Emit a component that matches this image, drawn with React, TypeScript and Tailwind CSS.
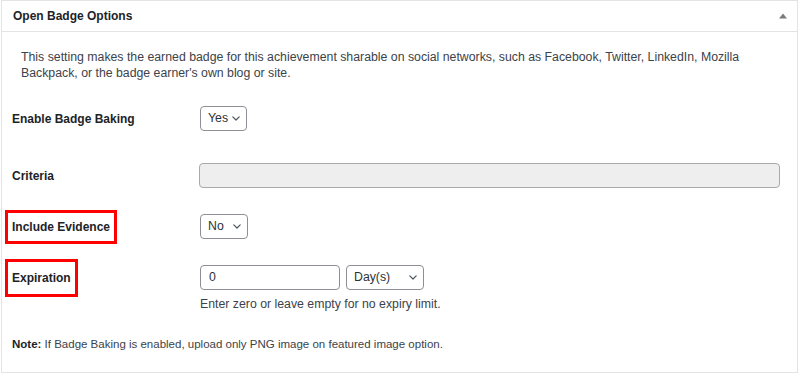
import React from "react";

const Chevron = () => (
  <svg width="8" height="5" viewBox="0 0 8 5" fill="none" className="shrink-0">
    <path d="M0.8 0.8l3.2 3.2 3.2-3.2" stroke="#50575e" strokeWidth="1.2" strokeLinecap="round" strokeLinejoin="round" />
  </svg>
);

function Select({ value, width }: { value: string; width: string }) {
  return (
    <div
      className={`flex h-[25px] items-center justify-between rounded-[4px] border border-[#8c8f94] bg-white pl-[7px] pr-[6px] text-[12.3px] text-[#2c3338] ${width}`}
    >
      <span>{value}</span>
      <Chevron />
    </div>
  );
}

export default function App() {
  return (
    <div
      className="h-[375px] w-[800px] bg-white pl-[1px]"
      style={{ fontFamily: "'Liberation Sans', Arial, sans-serif" }}
    >
      <div className="flex h-[373px] w-[797px] flex-col border border-[#e2e4e7] bg-white">
        <div className="flex h-[31px] items-center justify-between border-b border-[#e2e4e7] pl-[11px] pr-[10px]">
          <span className="text-[12px] font-bold text-[#1d2327]">Open Badge Options</span>
          <svg width="8" height="6" viewBox="0 0 8 6">
            <path d="M0 5.5L4 0.5 8 5.5z" fill="#787c82" />
          </svg>
        </div>
        <div className="flex flex-col pl-[10px] pr-[17px]">
          <p className="mt-[17px] pl-[9px] text-[12.3px] leading-[16px] text-[#3c434a]">
            This setting makes the earned badge for this achievement sharable on social networks, such as Facebook, Twitter, LinkedIn, Mozilla Backpack, or the badge earner's own blog or site.
          </p>

          <div className="mt-[25px] flex h-[25px] items-center">
            <span className="w-[188px] text-[12px] font-bold text-[#1d2327]">Enable Badge Baking</span>
            <Select value="Yes" width="w-[47px]" />
          </div>

          <div className="mt-[32px] flex h-[25px] items-center">
            <span className="w-[187px] text-[12px] font-bold text-[#1d2327]">Criteria</span>
            <div className="h-[25px] flex-1 rounded-[4px] border border-[#a7aaad] bg-[#eeeeee]" />
          </div>

          <div className="mt-[26px] flex h-[25px] items-center">
            <div className="w-[188px]">
              <span className="-ml-[7px] inline-block border-[3px] border-[#ff0000] px-[4px] py-[5px] text-[12px] font-bold text-[#1d2327]">
                Include Evidence
              </span>
            </div>
            <Select value="No" width="w-[48px]" />
          </div>

          <div className="mt-[26px] flex items-start">
            <div className="flex h-[25px] w-[188px] items-center">
              <span className="-ml-[7px] mt-[1px] inline-block border-[3px] border-[#ff0000] px-[4px] py-[7px] text-[12px] font-bold text-[#1d2327]">
                Expiration
              </span>
            </div>
            <div className="flex flex-col">
              <div className="flex h-[25px] gap-[6px]">
                <div className="flex h-[25px] w-[140px] items-center rounded-[4px] border border-[#8c8f94] bg-white pl-[8px] text-[12.3px] text-[#2c3338]">
                  0
                </div>
                <Select value="Day(s)" width="w-[78px]" />
              </div>
              <span className="mt-[6px] text-[12.3px] leading-[16px] text-[#3c434a]">
                Enter zero or leave empty for no expiry limit.
              </span>
            </div>
          </div>

          <p className="mt-[24px] text-[11.5px] leading-[16px] text-[#3c434a]">
            <span className="font-bold text-[#1d2327]">Note:</span> If Badge Baking is enabled, upload only PNG image on featured image option.
          </p>
        </div>
      </div>
    </div>
  );
}
